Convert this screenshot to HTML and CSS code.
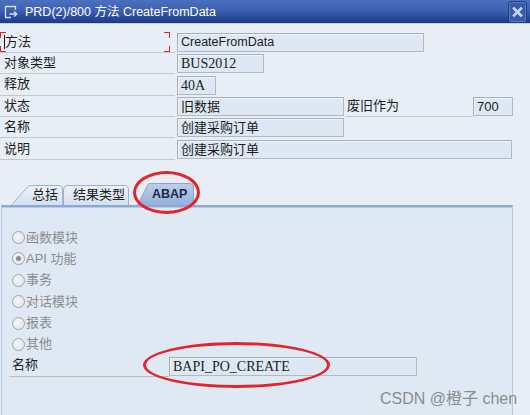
FILE: index.html
```html
<!DOCTYPE html>
<html lang="zh">
<head>
<meta charset="utf-8">
<title>PRD(2)/800 方法 CreateFromData</title>
<link rel="stylesheet" href="styles.css">
</head>
<body>
<div class="window">
  <header class="titlebar">
    <svg class="ticon" width="14" height="14" viewBox="0 0 14 14">
      <path d="M1.5 1.5 H11.5 V5 M1.5 1.5 V12.5 H7" fill="none" stroke="#d6e0f4" stroke-width="1.3"/>
      <path d="M5.5 9 H12.5 M10 6.5 L12.8 9 L10 11.5" fill="none" stroke="#d6e0f4" stroke-width="1.3"/>
    </svg>
    <span class="title">PRD(2)/800 方法 CreateFromData</span>
    <span class="close">
      <svg width="19" height="22" viewBox="0 0 19 22">
        <rect x="0.5" y="0.5" width="18" height="21" rx="2.5" fill="#3a5aa8" stroke="#233e80"/>
        <rect x="1.5" y="1.5" width="16" height="19" rx="2" fill="none" stroke="#5a7ac0"/>
        <path d="M6 7.5 L13 14.5 M13 7.5 L6 14.5" stroke="#c4d5f5" stroke-width="2.6" stroke-linecap="square"/>
      </svg>
    </span>
  </header>

  <section class="form">
    <div class="row">
      <div class="lbl focus"><span class="caret"></span>方法</div>
      <div class="fld sans w247">CreateFromData</div>
    </div>
    <div class="row">
      <div class="lbl">对象类型</div>
      <div class="fld serif w87">BUS2012</div>
    </div>
    <div class="row">
      <div class="lbl">释放</div>
      <div class="fld serif w39">40A</div>
    </div>
    <div class="row">
      <div class="lbl">状态</div>
      <div class="fld w167">旧数据</div>
      <div class="lbl lbl2">废旧作为</div>
      <div class="fld sans w40 nogap">700</div>
    </div>
    <div class="row">
      <div class="lbl">名称</div>
      <div class="fld w167">创建采购订单</div>
    </div>
    <div class="row">
      <div class="lbl">说明</div>
      <div class="fld w335">创建采购订单</div>
    </div>
  </section>

  <nav class="tabs">
    <div class="tab tab1">
      <svg class="tabshape" width="52" height="22" viewBox="0 0 52 22">
        <defs><linearGradient id="gt" x1="0" y1="0" x2="0" y2="1"><stop offset="0" stop-color="#eef3fa"/><stop offset="1" stop-color="#d3e0f0"/></linearGradient></defs>
        <path d="M0.5 22 L17 3.5 Q18 2.5 20 2.5 L48 2.5 Q51.5 2.5 51.5 6 L51.5 22" fill="url(#gt)" stroke="#9db2d1"/>
      </svg>
      <span class="tabtext">总括</span>
    </div>
    <div class="tab tab2">
      <svg class="tabshape" width="66" height="22" viewBox="0 0 66 22">
        <path d="M0.5 22 L0.5 6 Q1 3 4 2.5 L62 2.5 Q65.5 2.5 65.5 6 L65.5 22" fill="url(#gt)" stroke="#9db2d1"/>
      </svg>
      <span class="tabtext">结果类型</span>
    </div>
    <div class="tab tab3">
      <svg class="tabshape" width="57" height="22" viewBox="0 0 57 22">
        <defs><linearGradient id="ga" x1="0" y1="0" x2="0" y2="1"><stop offset="0" stop-color="#bcd0ec"/><stop offset="1" stop-color="#93afda"/></linearGradient></defs>
        <path d="M0.5 22 L11 1.5 Q12 0.5 14 0.5 L53 0.5 Q56.5 0.5 56.5 4 L56.5 22" fill="url(#ga)" stroke="#8aa4cf"/>
      </svg>
      <span class="tabtext">ABAP</span>
    </div>
  </nav>

  <section class="panel">
    <div class="radio"><span class="dot"></span><span>函数模块</span></div>
    <div class="radio"><span class="dot on"></span><span>API 功能</span></div>
    <div class="radio"><span class="dot"></span><span>事务</span></div>
    <div class="radio"><span class="dot"></span><span>对话模块</span></div>
    <div class="radio"><span class="dot"></span><span>报表</span></div>
    <div class="radio"><span class="dot"></span><span>其他</span></div>
    <div class="prow">
      <div class="plbl">名称</div>
      <div class="fld serif w248 nogap">BAPI_PO_CREATE</div>
    </div>
  </section>

  <div class="ring ring-abap"></div>
  <div class="ring ring-bapi"></div>
  <div class="wm">CSDN @橙子 chen</div>
</div>
</body>
</html>
```

FILE: styles.css
```css
html, body {
  margin: 0;
  padding: 0;
}
body {
  background: #e8eef6;
  font-family: "Liberation Sans", "Noto Sans CJK SC", sans-serif;
  font-size: 13px;
  color: #1e1e1e;
}
.window {
  position: relative;
  width: 530px;
  height: 415px;
  overflow: hidden;
  background: #e8eef6;
}

/* title bar */
.titlebar {
  height: 23px;
  border-bottom: 1px solid #c2cee3;
  background: linear-gradient(#4c70c0 0%, #3d60b0 45%, #29479a 80%, #1f3a84 100%);
  display: flex;
  align-items: center;
  padding-left: 4px;
  color: #fff;
}
.ticon {
  display: block;
  margin-right: 7px;
}
.title {
  font-size: 12.5px;
  line-height: 16px;
}
.close {
  margin-left: auto;
  margin-right: 3px;
  display: flex;
}
.close svg { display: block; }

/* form */
.form {
  padding-top: 7.5px;
}
.row {
  display: flex;
  align-items: flex-end;
  height: 21.4px;
}
.lbl {
  position: relative;
  box-sizing: border-box;
  width: 175px;
  height: 100%;
  border-bottom: 1px solid #c4c9d0;
  padding-left: 4px;
  display: flex;
  align-items: center;
  line-height: 16px;
}
.lbl2 {
  width: 127px;
  margin-left: 2px;
  padding-left: 1px;
}
.focus::before {
  content: "";
  position: absolute;
  left: 0;
  top: 0;
  width: 170px;
  height: 100%;
  background:
    linear-gradient(#e0242a, #e0242a) left top / 6px 1px,
    linear-gradient(#e0242a, #e0242a) left top / 1px 6px,
    linear-gradient(#e0242a, #e0242a) right top / 6px 1px,
    linear-gradient(#e0242a, #e0242a) right top / 1px 6px,
    linear-gradient(#e0242a, #e0242a) left bottom / 6px 1px,
    linear-gradient(#e0242a, #e0242a) left bottom / 1px 6px,
    linear-gradient(#e0242a, #e0242a) right bottom / 6px 1px,
    linear-gradient(#e0242a, #e0242a) right bottom / 1px 6px;
  background-repeat: no-repeat;
}
.caret {
  display: inline-block;
  width: 1px;
  height: 14px;
  background: #111;
}
.fld {
  box-sizing: border-box;
  height: 19px;
  margin-left: 2px;
  margin-bottom: 1px;
  background: #dde8f4;
  border: 1px solid #b3b9c1;
  border-top-color: #a9afb8;
  border-left-color: #a9afb8;
  box-shadow: inset 1px 1px 0 #eef3f9;
  padding-left: 3px;
  line-height: 17px;
  white-space: nowrap;
  overflow: hidden;
  color: #1c1c1c;
}
.nogap { margin-left: 0; }
.sans { font-family: "Liberation Sans", "Noto Sans CJK SC", sans-serif; font-size: 13px; }
.serif { font-family: "Liberation Serif", serif; font-size: 14px; }
.w247 { width: 247px; }
.w87 { width: 87px; }
.w39 { width: 39px; }
.w167 { width: 167px; }
.w40 { width: 40px; }
.w335 { width: 335px; }
.w248 { width: 248px; }
.w247.sans { font-size: 12.5px; }

/* tabs */
.tabs {
  display: flex;
  align-items: flex-end;
  height: 22px;
  margin-top: 23px;
  padding-left: 11px;
}
.tab {
  position: relative;
  height: 22px;
  display: flex;
  align-items: center;
}
.tabshape {
  position: absolute;
  left: 0;
  top: 0;
  display: block;
}
.tabtext {
  position: relative;
  line-height: 16px;
  font-size: 13px;
  color: #202020;
  padding-top: 3px;
}
.tab1 { width: 52px; padding-left: 21px; box-sizing: border-box; }
.tab2 { width: 66px; padding-left: 10px; box-sizing: border-box; }
.tab3 { width: 57px; padding-left: 15px; box-sizing: border-box; margin-left: 8px; }
.tab3 .tabtext { font-weight: bold; color: #1b2b45; padding-top: 1px; font-size: 12.5px; }

/* panel */
.panel {
  box-sizing: border-box;
  margin-left: 1px;
  width: 512px;
  height: 215px;
  background: #dfe9f4;
  border: 1px solid #b4c8e4;
  border-top: 2px solid #8ea8d3;
  box-shadow: inset 0 1px 0 #b9cbe8;
  padding-top: 20px;
}
.radio {
  display: flex;
  align-items: center;
  height: 21.4px;
  padding-left: 10px;
  color: #8c8c8c;
  line-height: 16px;
}
.dot {
  box-sizing: border-box;
  width: 13px;
  height: 13px;
  border-radius: 50%;
  border: 1.5px solid #a3a3a3;
  background: radial-gradient(circle at 40% 40%, #f2f5f9 0%, #e3e9f0 70%);
  margin-right: 1px;
  display: flex;
  align-items: center;
  justify-content: center;
}
.dot.on::after {
  content: "";
  width: 5px;
  height: 5px;
  border-radius: 50%;
  background: #8a8a8a;
}
.prow {
  display: flex;
  align-items: flex-end;
  height: 21.4px;
  padding-left: 7px;
}
.plbl {
  box-sizing: border-box;
  width: 160px;
  height: 100%;
  border-bottom: 1px solid #b9bec6;
  padding-left: 3px;
  display: flex;
  align-items: center;
  color: #1e1e1e;
  line-height: 16px;
}
.prow .fld { margin-bottom: 1px; }

/* annotations */
.ring {
  position: absolute;
  box-sizing: border-box;
  border: 3px solid #e3252b;
  border-radius: 50%;
}
.ring-abap {
  left: 133px;
  top: 171px;
  width: 67px;
  height: 43px;
}
.ring-bapi {
  left: 143px;
  top: 342px;
  width: 187px;
  height: 46px;
}
.wm {
  position: absolute;
  left: 380px;
  top: 389px;
  font-size: 16px;
  line-height: 20px;
  color: #8c8c8c;
  white-space: nowrap;
}
```
